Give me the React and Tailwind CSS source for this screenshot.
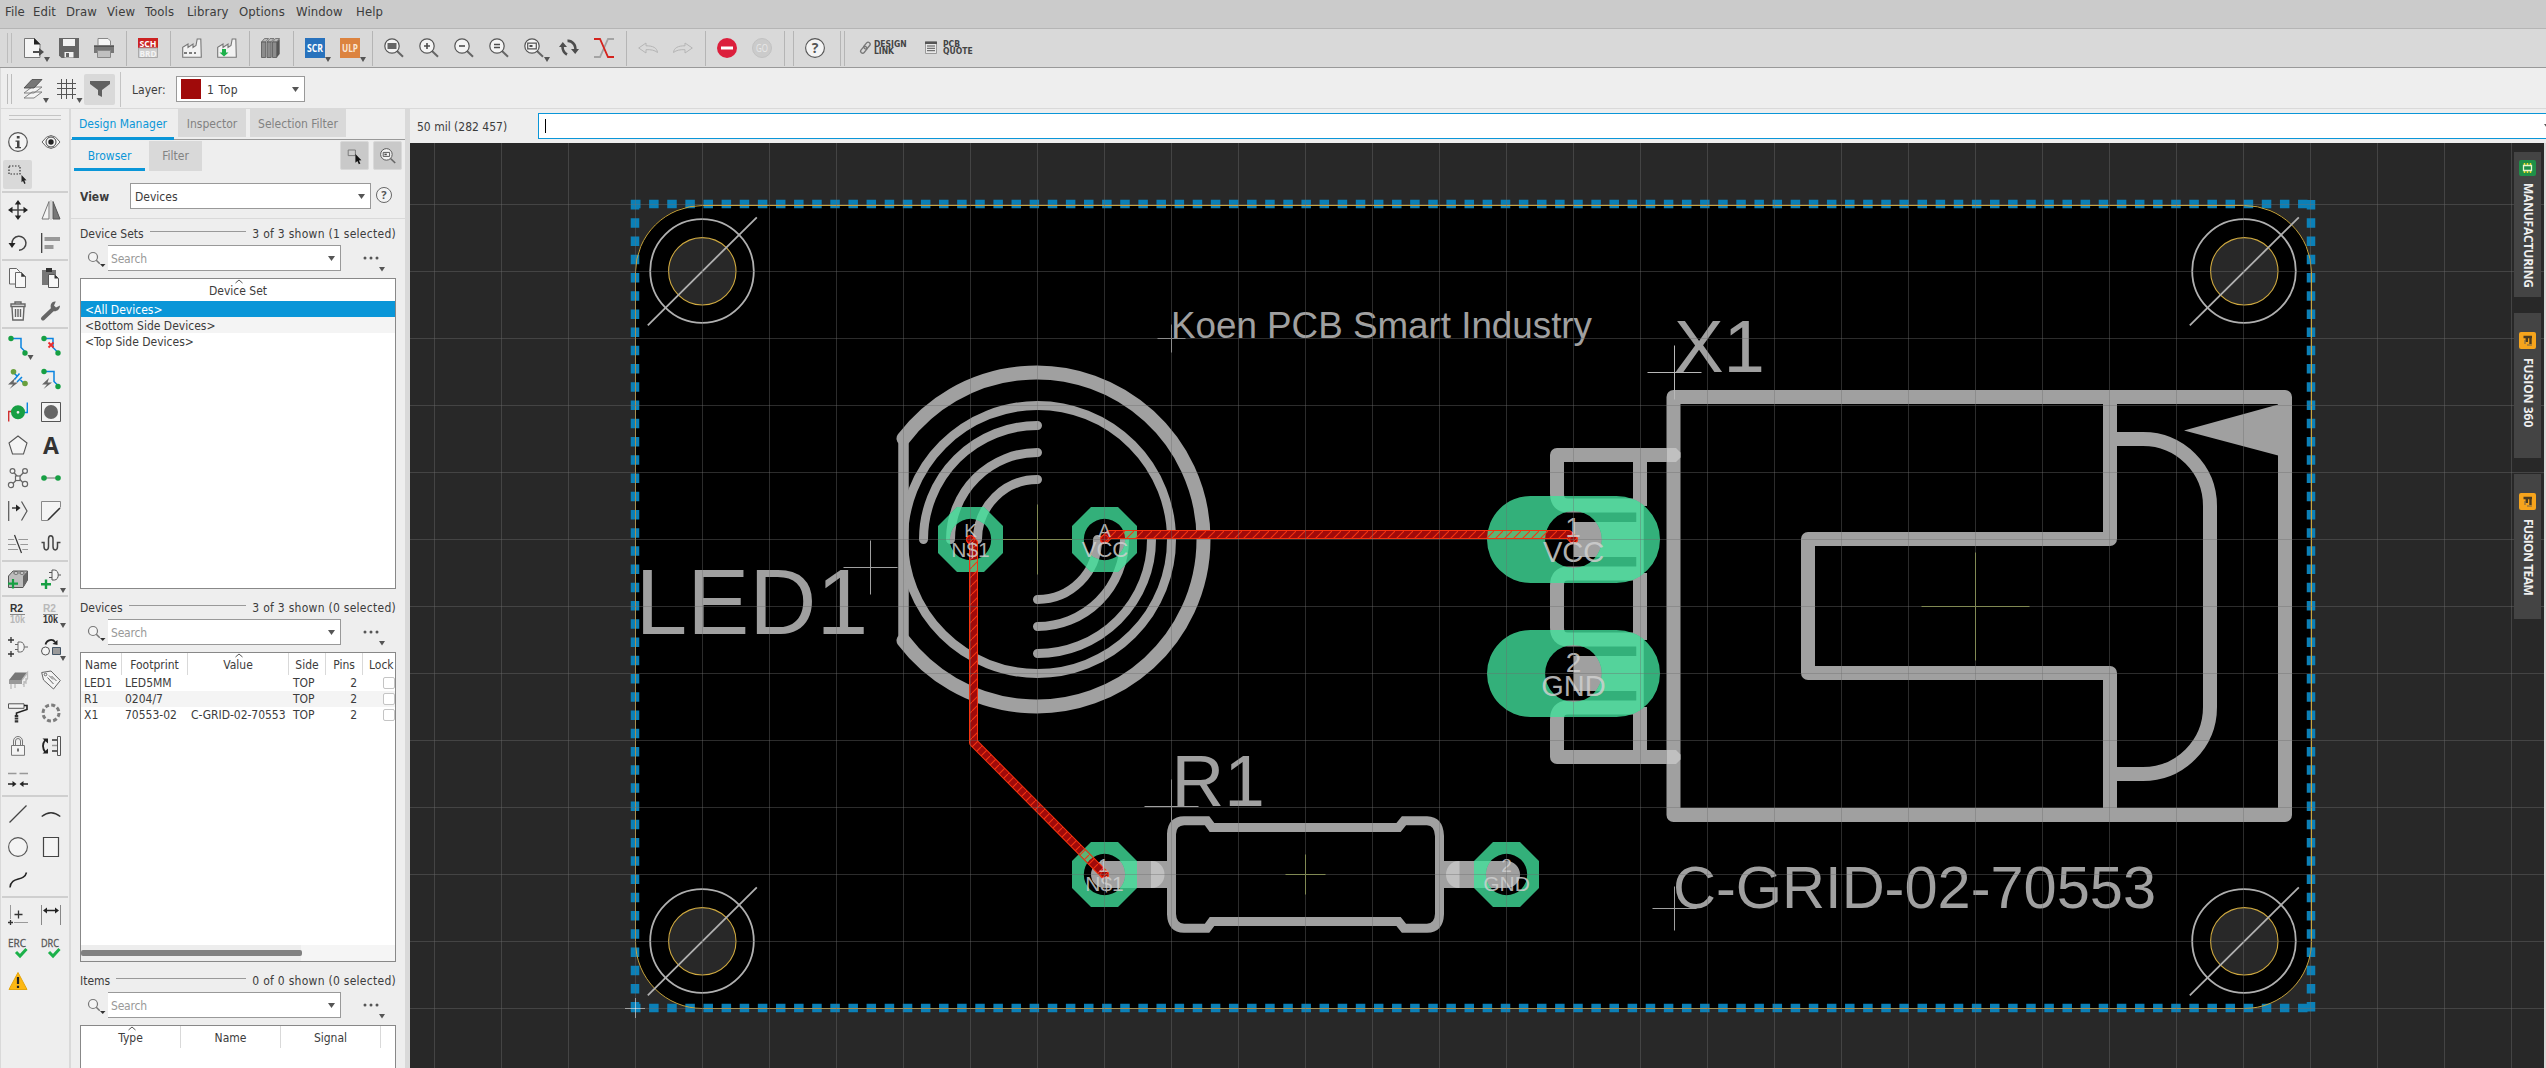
import React from "react";

const D = "#4d4d4d";
const G = "#169f43";
const B = "#0a84e0";

const Arrow = ({ x = 20, y = 19 }) => <path d={`M${x} ${y}h6l-3 5z`} fill="#555" />;

function Lens({ children }) {
  return (
    <>
      <path d="M12.5 12.5l6.5 6.2" stroke="#666" strokeWidth="2" />
      <circle cx="8" cy="8" r="7.2" fill="#f4f4f4" stroke="#555" strokeWidth="1.2" />
      {children}
    </>
  );
}

const Factory = () => (
  <path d="M.7 19.3V9.2L6 6v3.4L11 6v3.4l3-1.9L15.2 1h3.6l.5 18.3z" fill="#f2f2f2" stroke="#777" strokeWidth="1.1" />
);

const ICONS = {
  new: (
    <>
      <path d="M.5.5h10l5.5 5.5v13.500H.5z" fill="#f5f5f5" stroke="#777" />
      <path d="M10 0l6.500 6.500H10z" fill="#222" />
      <path d="M9 14h8" stroke={D} strokeWidth="2" />
      <path d="M15 10l5 4-5 4z" fill={D} />
      <Arrow />
    </>
  ),
  save: (
    <>
      <path d="M0 0h20v20H2.500L0 17.500z" fill="#666" />
      <path d="M4 1h12v7H4z" fill="#f2f2f2" />
      <path d="M5.500 14h9v5.500h-9z" fill="#f2f2f2" />
      <path d="M7 15h3v4H7z" fill="#666" />
    </>
  ),
  print: (
    <>
      <path d="M4 7V.5h10l2.500 2.500V7" fill="#f5f5f5" stroke="#888" />
      <path d="M0 7h20v8H0z" fill="#777" />
      <path d="M0 8.500h20" stroke="#555" />
      <path d="M3.500 12.500h13v7h-13z" fill="#c0c0c0" stroke="#888" />
    </>
  ),
  sch: (
    <>
      <path d="M0 0h20v10H0z" fill="#cc2222" />
      <path d="M.5 10h19v9.500H.5z" fill="#cfcfcf" stroke="#aaa" />
      <text x="10" y="8.700" textAnchor="middle" fontSize="9" fontWeight="bold" fill="#fff" fontFamily="Open Sans" textLength="17" lengthAdjust="spacingAndGlyphs">SCH</text>
      <text x="10" y="18.500" textAnchor="middle" fontSize="9" fontWeight="bold" fill="#f4f4f4" fontFamily="Open Sans" textLength="17" lengthAdjust="spacingAndGlyphs">BRD</text>
    </>
  ),
  fac: (
    <>
      <Factory />
      <path d="M2 15h12" stroke="#555" strokeWidth="1.500" strokeDasharray="3 2" />
    </>
  ),
  fac2: (
    <>
      <Factory />
      <path d="M5 11h4v3.500h2.500L7 18.500 2.500 14.500H5z" fill="#1cb14a" />
    </>
  ),
  books: (
    <>
      {[0, 5.5, 11].map((x) => (
        <g key={x}>
          <path d={`M${x + 0.5} 4l3-3.500h4l-3 3.500z`} fill="#bbb" stroke="#666" strokeWidth=".8" />
          <path d={`M${x + 0.5} 4h4.200v15.500h-4.200z`} fill="#8c8c8c" stroke="#555" strokeWidth=".8" />
        </g>
      ))}
      <path d="M15.700 4l3-3v15l-3 3.500z" fill="#555" />
    </>
  ),
  scr: (
    <>
      <path d="M0 0h20v20H0z" fill="#2872bd" />
      <text x="10" y="13.500" textAnchor="middle" fontSize="10" fontWeight="bold" fill="#fff" fontFamily="Open Sans" textLength="16" lengthAdjust="spacingAndGlyphs">SCR</text>
      <Arrow />
    </>
  ),
  ulp: (
    <>
      <path d="M0 0h20v20H0z" fill="#dc833f" />
      <text x="10" y="13.500" textAnchor="middle" fontSize="10" fontWeight="bold" fill="#fbe6d4" fontFamily="Open Sans" textLength="16" lengthAdjust="spacingAndGlyphs">ULP</text>
      <Arrow />
    </>
  ),
  zfit: <Lens><path d="M3.500 5h9v6h-9z" fill="#666" /></Lens>,
  zin: <Lens><path d="M8 5v6M5 8h6" stroke={D} strokeWidth="1.600" /></Lens>,
  zout: <Lens><path d="M5 8h6" stroke={D} strokeWidth="1.600" /></Lens>,
  zeq: <Lens><path d="M5 6.500h6M5 9.500h6" stroke={D} strokeWidth="1.300" /></Lens>,
  zsel: (
    <>
      <Lens><path d="M3.700 5.200h8.600v5.600H3.700z" fill="none" stroke="#555" strokeWidth="1.200" /><path d="M5.500 7h3v2h-3z" fill={D} /></Lens>
      <Arrow />
    </>
  ),
  zdev: <Lens><path d="M4 5.500h8v5H4z" fill="none" stroke="#555" strokeWidth="1.200" /><path d="M5.500 7h3v2h-3z" fill={D} /></Lens>,
  pick: (
    <>
      <path d="M1.500 2.500h9v7h-9z" fill="#ccc" stroke="#777" strokeWidth="1.200" />
      <path d="M10.500 7.500l7.500 7.800-3.200.3 1.900 3.900-1.900.8-1.800-3.900-2.500 2z" fill="#111" />
    </>
  ),
  redraw: (
    <>
      <path d="M3.500 8.500Q3.500 14 8 16.500M16.500 11.500Q16.500 6 12 3.500q-1.500-.8-3.500-.6" fill="none" stroke={D} strokeWidth="2.600" />
      <path d="M0 9l3.800-5L8 9zM12 11l4.200 5L20 11z" fill={D} />
    </>
  ),
  ratio: (
    <>
      <path d="M0 19h6l8-18h6" fill="none" stroke="#a3a3a3" strokeWidth="1.800" />
      <path d="M0 1h6l8 18h6" fill="none" stroke="#d4231d" strokeWidth="1.800" />
    </>
  ),
  undo: <path d="M.7 10L8 5v2.800c7 0 11 2 11.500 6.700-3-2.500-7-3-11.500-2.800V15z" fill="none" stroke="#b5b5b5" />,
  redo: <path d="M19.300 10L12 5v2.800C5 7.800 1 9.800.5 14.500c3-2.500 7-3 11.500-2.800V15z" fill="none" stroke="#b5b5b5" />,
  stop: (
    <>
      <circle cx="10" cy="10" r="10" fill="#dc1f3c" />
      <path d="M4 8.500h12v3H4z" fill="#fff" />
    </>
  ),
  go: (
    <>
      <circle cx="10" cy="10" r="9.500" fill="#cbcbcb" stroke="#c2c2c2" />
      <text x="10" y="13.800" textAnchor="middle" fontSize="10" fill="#e8e8e8" fontFamily="Open Sans" textLength="12" lengthAdjust="spacingAndGlyphs">GO</text>
    </>
  ),
  help: (
    <>
      <circle cx="10" cy="10" r="9.400" fill="#f4f4f4" stroke="#555" strokeWidth="1.100" />
      <text x="10" y="15" textAnchor="middle" fontSize="14" fontWeight="bold" fill="#555" fontFamily="Open Sans">?</text>
    </>
  ),
  link: (
    <g fill="none" stroke="#777" strokeWidth="1.300">
      <rect x="-3.800" y="-2" width="7.600" height="4" rx="2" transform="translate(3.800 11.800) rotate(-50)" />
      <rect x="-3.800" y="-2" width="7.600" height="4" rx="2" transform="translate(7 7.600) rotate(-50)" />
    </g>
  ),
  quote: (
    <>
      <path d="M.5 4h11v11.500H.5z" fill="#e8e8e8" stroke="#999" />
      <path d="M0 3.500h12v2.500H0z" fill="#555" />
      <path d="M2 8h8M2 10.300h8M2 12.700h8" stroke="#555" />
    </>
  ),
  layers: (
    <>
      <path d="M1 19l8-6h10l-8 6zM1 14l8-6h10l-8 6z" fill="#f4f4f4" stroke="#777" strokeWidth=".9" />
      <path d="M1 9l8-8.500h10L11 9z" fill="#777" stroke="#444" strokeWidth=".8" />
      <Arrow x={20} y={19} />
    </>
  ),
  grid: (
    <>
      <path d="M4.500 0v20M9.500 0v20M15.500 0v20M0 4.500h19M0 9.500h19M0 15.500h19" stroke="#555" strokeWidth="1" />
      <Arrow x={19.500} y={19} />
    </>
  ),
  funnel: <path d="M0 2h20v3l-8 6v7l-4-2v-5L0 5z" fill="#606060" />,
  info: (
    <>
      <circle cx="10" cy="10" r="9.300" fill="#f4f4f4" stroke="#555" strokeWidth="1.200" />
      <path d="M8.800 4h2.800v2.500H8.800zM7.500 8.500h4V15H13v1.200H7.300V15H9V9.700H7.500z" fill="#444" />
    </>
  ),
  eye: (
    <>
      <path d="M1 10q9-13 18 0-9 13-18 0z" fill="#f4f4f4" stroke="#666" />
      <circle cx="10" cy="10" r="5" fill="none" stroke="#444" />
      <circle cx="10" cy="10" r="2.700" fill="#222" />
    </>
  ),
  select: (
    <>
      <path d="M1 1h11v8H1z" fill="none" stroke="#333" strokeWidth="1.200" strokeDasharray="1.500 1.500" />
      <path d="M13.500 10l5 5.200-2.200.2 1.300 2.900-1.300.6-1.300-2.900-1.500 1.300z" fill="#222" />
    </>
  ),
  move: (
    <>
      <path d="M10 3v14M3 10h14" stroke="#444" strokeWidth="1.500" />
      <path d="M10 0l3.200 4.500H6.800zM10 20l3.200-4.500H6.800zM0 10l4.500-3.200v6.400zM20 10l-4.500-3.200v6.400z" fill="#222" />
    </>
  ),
  mirror: (
    <>
      <path d="M8 1.500V19H1z" fill="#f4f4f4" stroke="#777" />
      <path d="M12 1.500V19h7z" fill="#777" stroke="#555" />
      <path d="M10 0v20" stroke="#aaa" strokeWidth=".7" />
    </>
  ),
  rotate: (
    <>
      <path d="M4 11A7 7 0 1 1 11 17.200" fill="none" stroke="#444" strokeWidth="1.500" />
      <path d="M.5 10h7L4 15z" fill="#222" />
    </>
  ),
  align: (
    <>
      <path d="M.700 0v20" stroke="#333" strokeWidth="1.200" />
      <path d="M3.500 4H19v4H3.500zM3.500 12h9v4h-9z" fill="#999" />
    </>
  ),
  copy: (
    <g fill="#f7f7f7" stroke="#666">
      <path d="M1.500.5h7l3 3V16h-10z" />
      <path d="M7.500 4.500h6l4 4v11h-10z" />
      <path d="M13.500 4.500v4h4z" fill="#333" />
    </g>
  ),
  paste: (
    <>
      <path d="M1 2h14v15H1z" fill="#777" />
      <path d="M5 0h6v4H5z" fill="#333" />
      <path d="M7.500 6.500h6l4 4v9h-10z" fill="#f7f7f7" stroke="#555" />
      <path d="M13.500 6.500v4h4z" fill="#333" />
    </>
  ),
  trash: (
    <g fill="none" stroke="#666" strokeWidth="1.400">
      <path d="M7 3V1h6v2" />
      <path d="M3 3h14v2.500H3zM4 6l.8 13h10.400L16 6" fill="#f4f4f4" />
      <path d="M7.500 8v8M10 8v8M12.500 8v8" />
    </g>
  ),
  wrench: (
    <>
      <path d="M2 17.500L12 8" stroke="#666" strokeWidth="4" strokeLinecap="round" />
      <path d="M19 4.500l-4 2-2-2L14.800.6C10 0 8.500 5 10.500 8.500s8.500 1.500 8.500-4z" fill="#666" />
    </>
  ),
  route: (
    <>
      <path d="M3 2.500h10v9l5 5" fill="none" stroke={B} strokeWidth="1.500" />
      <circle cx="3" cy="2.500" r="2.700" fill={G} />
      <circle cx="17" cy="17" r="2.700" fill={G} />
      <Arrow x={19.500} y={19} />
    </>
  ),
  ripup: (
    <>
      <path d="M3 2.500h9v9l5 5" fill="none" stroke={B} strokeWidth="1.500" />
      <circle cx="3" cy="2.500" r="2.700" fill={G} />
      <circle cx="17" cy="17" r="2.700" fill={G} />
      <path d="M7.500 6.500l5 5M12.500 6.500l-5 5" stroke="#ee2a2a" strokeWidth="1.800" />
    </>
  ),
  rats: (
    <>
      <path d="M5 3l4.500 4.500M12.500 11L17 15.500M6.500 10.500l5-6M9 13l5-5" stroke={B} strokeWidth="1.500" />
      <circle cx="5.500" cy="2.800" r="2.800" fill="#69a03e" />
      <circle cx="17" cy="14.500" r="2.800" fill="#69a03e" />
      <path d="M7 9L0 15.500h5L1.500 20 10 13.500H5.500z" fill="#666" />
    </>
  ),
  auto: (
    <>
      <path d="M3 2.500h10v10l4 4" fill="none" stroke={B} strokeWidth="1.500" />
      <circle cx="3" cy="2.500" r="2.700" fill={G} />
      <circle cx="17" cy="17.500" r="2.700" fill={G} />
      <path d="M8 9L1 15.500h5L2.500 20 11 13.500H6.500z" fill="#666" />
    </>
  ),
  via: (
    <>
      <path d="M.7 19.500V9.500h4" fill="none" stroke="#d03030" strokeWidth="1.400" />
      <path d="M19.300.5v10h-4" fill="none" stroke={B} strokeWidth="1.400" />
      <circle cx="10" cy="10.300" r="4.200" fill="none" stroke={G} strokeWidth="5.600" />
    </>
  ),
  hole: (
    <>
      <path d="M.5.500h19v19H.5z" fill="#f4f4f4" stroke="#555" />
      <circle cx="10" cy="10" r="7" fill="#666" />
    </>
  ),
  poly: <path d="M10 1l9 7-3.500 11h-11L1 8z" fill="#f4f4f4" stroke="#555" strokeWidth="1.100" />,
  text: <text x="10" y="18.500" textAnchor="middle" fontSize="23" fontWeight="bold" fill="#333" fontFamily="Open Sans">A</text>,
  net: (
    <g fill="#f4f4f4" stroke="#666" strokeWidth="1.200">
      <path d="M5 3.500l11 12.500M16.500 3.500L3.500 17" />
      <rect x="7.500" y="8" width="4.500" height="4.500" />
      <circle cx="4.500" cy="3" r="2.400" />
      <circle cx="17" cy="3" r="2.400" />
      <circle cx="3" cy="17" r="2.600" />
      <circle cx="17" cy="16" r="2.600" />
    </g>
  ),
  airwire: (
    <>
      <path d="M3 10h14" stroke="#999" strokeWidth="1.500" />
      <circle cx="3" cy="10" r="2.800" fill={G} />
      <circle cx="17" cy="10" r="2.800" fill={G} />
    </>
  ),
  split: (
    <>
      <path d="M.7 0v20M13.500.5L19 10l-5.500 9.500" fill="none" stroke="#555" strokeWidth="1.200" />
      <path d="M4 7h5" stroke="#222" strokeWidth="1.300" />
      <path d="M8 3.500l4.500 3.500L8 10.500z" fill="#222" />
    </>
  ),
  miter: (
    <>
      <path d="M7 19.500H.5V.5h19v7z" fill="#f4f4f4" />
      <path d="M7 19.500H.5V.5h19v6" fill="none" stroke="#888" />
      <path d="M7 19L19 7" stroke="#333" strokeWidth="1.600" />
    </>
  ),
  slice: (
    <>
      <path d="M0 5.500h20M0 10.500h20M0 15.500h20" stroke="#999" />
      <path d="M6.500 1l7 18" stroke="#eee" strokeWidth="4" />
      <path d="M6.500 1l7 18" stroke="#333" strokeWidth="1.200" />
    </>
  ),
  meander: <path d="M.5 8.500h2.500v4c0 4.500 4.500 4.500 4.500 0V5c0-4.500 4.500-4.500 4.500 0v7.500c0 4.500 4.500 4.500 4.500 0v-4H19.500" fill="none" stroke="#444" strokeWidth="1.500" />,
  addpart: (
    <>
      <path d="M.5 7L5 2h14.500v9L15 18.500H.5z" fill="#bdbdbd" stroke="#555" />
      <path d="M15 7l4.500-5v9L15 18.500z" fill="#666" />
      <ellipse cx="8" cy="4" rx="2.200" ry="1.300" fill="#eee" stroke="#444" strokeWidth=".8" />
      <ellipse cx="14" cy="4" rx="2.200" ry="1.300" fill="#eee" stroke="#444" strokeWidth=".8" />
      <path d="M5 10v9.500M0 14.700h10" stroke={G} strokeWidth="2.200" />
    </>
  ),
  addgate: (
    <>
      <path d="M11 1h2.500c5 0 5 10 0 10H11zM8 3.500h3M8 8.500h3M17.500 6H20" fill="#f4f4f4" stroke="#555" />
      <path d="M5 10.500v9.500M0 15.300h10" stroke={G} strokeWidth="2.400" />
      <Arrow x={19} y={19} />
    </>
  ),
  r2: (
    <g fontFamily="Liberation Sans" fontSize="10" fontWeight="bold">
      <text x="2" y="8" fill="#333" textLength="13" lengthAdjust="spacingAndGlyphs">R2</text>
      <path d="M2 10.500h15" stroke="#888" />
      <text x="2" y="19.300" fill="#b8b8b8" textLength="15" lengthAdjust="spacingAndGlyphs">10k</text>
    </g>
  ),
  r2b: (
    <g fontFamily="Liberation Sans" fontSize="10" fontWeight="bold">
      <text x="2" y="8" fill="#b8b8b8" textLength="13" lengthAdjust="spacingAndGlyphs">R2</text>
      <path d="M2 10.500h15" stroke="#888" />
      <text x="2" y="19.300" fill="#333" textLength="15" lengthAdjust="spacingAndGlyphs">10k</text>
      <Arrow x={19} y={19} />
    </g>
  ),
  gates: (
    <>
      <path d="M3 0v6M0 3h6M3 14v6M0 17h6" stroke="#333" strokeWidth="1.300" />
      <path d="M10 5h2.500c5 0 5 10 0 10H10zM7 7.500h3M7 12.500h3M16.500 10H20" fill="#f4f4f4" stroke="#666" />
    </>
  ),
  replace: (
    <>
      <path d="M4.500 7.500C6 2 12 2 14 5" fill="none" stroke="#222" strokeWidth="1.800" />
      <path d="M11.500 7l5-4v5z" fill="#222" />
      <circle cx="4.500" cy="14" r="4" fill="#f4f4f4" stroke="#555" />
      <path d="M11.500 10.500h8v7h-8z" fill="#999" stroke="#456" />
      <Arrow x={19} y={19} />
    </>
  ),
  chip: (
    <>
      <path d="M1 10l6-7.500h12.500L14 10z" fill="#777" />
      <path d="M1 10h13v4H1z" fill="#999" />
      <path d="M14 10l5.500-7.500v6L15 15M3 14v5M7 14v4M18 8v6M16 11v6" stroke="#bbb" strokeWidth="1.300" fill="none" />
    </>
  ),
  tag: (
    <g fill="#f4f4f4" stroke="#666">
      <path d="M.7 2.500L10 1l9.300 9.500-6.800 8.500L2.500 10z" />
      <circle cx="4.500" cy="4.500" r="1.300" />
      <path d="M8 5.500l4 4M6.500 7.500l6 6.500M10.500 6l5 5" />
    </g>
  ),
  paint: (
    <>
      <path d="M.5.8h15.500v4.500H.5z" fill="#f4f4f4" stroke="#555" />
      <path d="M16 2.500h3v4L8.500 10v3.500" fill="none" stroke="#222" strokeWidth="1.600" />
      <path d="M8.500 12v8" stroke="#333" strokeWidth="3.500" strokeDasharray="2 .6" />
    </>
  ),
  array: <circle cx="10" cy="10" r="8" fill="none" stroke="#7d7d7d" strokeWidth="3" strokeDasharray="4 2.280" />,
  lock: (
    <g stroke="#777" fill="none">
      <path d="M5.500 9.500V5a4.500 4.500 0 0 1 9 0v4.500M7.500 9.500V5a2.500 2.500 0 0 1 5 0v4.500" />
      <path d="M3.500 9.500h13v9.800h-13z" fill="#f4f4f4" />
      <path d="M10 12.500v3" stroke="#444" strokeWidth="1.500" />
    </g>
  ),
  pinswap: (
    <>
      <path d="M4.500 3.500q-5 6.500 0 13" fill="none" stroke="#222" strokeWidth="1.800" />
      <path d="M1.500 2.500h5.500v5zM1.500 17.500h5.500v-5z" fill="#222" />
      <path d="M16.500.5h3v19h-3z" fill="#f4f4f4" stroke="#555" />
      <path d="M11 4h5M11 15h5" stroke="#333" strokeWidth="1.500" />
      <path d="M11 9.500h5" stroke="#999" strokeWidth="1.500" />
    </>
  ),
  optimize: (
    <>
      <path d="M0 4.500h8.500M11.500 4.500H20" stroke="#999" strokeWidth="1.400" />
      <path d="M0 15h5M20 15h-5" stroke="#222" strokeWidth="1.300" />
      <path d="M4.500 12l4 3-4 3zM15.500 12l-4 3 4 3z" fill="#222" />
    </>
  ),
  line: <path d="M1.500 18.500l17-17" stroke="#444" strokeWidth="1.200" />,
  arc: <path d="M.7 12.500q9.300-7.500 18.600 0" fill="none" stroke="#333" strokeWidth="1.300" />,
  circle: <circle cx="10" cy="10" r="9.400" fill="#f4f4f4" stroke="#555" strokeWidth="1.100" />,
  rect: <path d="M2.500.5h15v19h-15z" fill="#f4f4f4" stroke="#444" strokeWidth="1.200" />,
  spline: <path d="M2 17.500c1-12 14-5 16.500-15" fill="none" stroke="#222" strokeWidth="1.500" />,
  mark: (
    <>
      <path d="M2.500 0v14M6 17.500h14" stroke="#999" />
      <path d="M10.500 5.500v8M6.500 9.500h8M2.500 15v5M0 17.500h5" stroke="#333" strokeWidth="1.300" />
    </>
  ),
  dimension: (
    <>
      <path d="M.5 0v20M19.500 0v20" stroke="#888" />
      <path d="M4 5.500h12" stroke="#222" strokeWidth="1.500" />
      <path d="M2 5.500l4-3v6zM18 5.500l-4-3v6z" fill="#222" />
    </>
  ),
  erc: (
    <>
      <text x="0" y="9" fontSize="11" fill="#555" stroke="#555" strokeWidth=".3" fontFamily="Open Sans" textLength="18" lengthAdjust="spacingAndGlyphs">ERC</text>
      <path d="M8 14l4 4 6.500-7" fill="none" stroke="#1cb14a" strokeWidth="3" />
    </>
  ),
  drc: (
    <>
      <text x="0" y="9" fontSize="11" fill="#555" stroke="#555" strokeWidth=".3" fontFamily="Open Sans" textLength="18" lengthAdjust="spacingAndGlyphs">DRC</text>
      <path d="M8 14l4 4 6.500-7" fill="none" stroke="#1cb14a" strokeWidth="3" />
    </>
  ),
  warn: (
    <>
      <path d="M10 1.500l9 17H1z" fill="#fdb813" stroke="#e5a50a" />
      <path d="M10 6v7M10 14.800v2.200" stroke="#222" strokeWidth="2.200" />
    </>
  ),
};

function Icon({ n, size = 20 }) {
  return (
    <svg width={size} height={size} viewBox="0 0 20 20" className="block shrink-0 overflow-visible">
      {ICONS[n]}
    </svg>
  );
}

const MENU = [
  ["File", "w-[28px]"], ["Edit", "w-[33px]"], ["Draw", "w-[41px]"], ["View", "w-[38px]"], ["Tools", "w-[42px]"],
  ["Library", "w-[52px]"], ["Options", "w-[57px]"], ["Window", "w-[60px]"], ["Help", "w-[40px]"],
];

function MenuBar() {
  return (
    <div className="flex h-[29px] shrink-0 border-b border-[#b5b5b5] bg-[#cbcbcb] pl-[5px] pt-[3px] text-[13px] leading-[17px] tracking-[0.1px]">
      {MENU.map(([t, w]) => <span key={t} className={w}>{t}</span>)}
    </div>
  );
}

const BAR = ["new", "save", "print", "|", "sch", "|", "fac", "fac2", "|", "books", "|", "scr", "ulp", "|", "zfit", "zin", "zout", "zeq", "zsel", "redraw", "ratio", "|", "undo", "redo", "|", "stop", "go", "|", "|", "help"];

const Grip = () => <span className="mr-[12px] h-[30px] w-[5px] shrink-0 border-x border-[#bcbcbc]" />;

function ToolBar() {
  return (
    <div className="flex h-[39px] shrink-0 items-center border-b border-[#999] bg-[#d9d9d9] pl-[7px]">
      <Grip />
      {BAR.map((n, i) =>
        n === "|" ? (
          <span key={i} className="-ml-[3px] h-[35px] w-[12px] shrink-0 border-l border-[#b5b5b5]" />
        ) : (
          <span key={i} className="mr-[15px]"><Icon n={n} /></span>
        )
      )}
      <span className="mr-[15px] h-[35px] w-[5px] shrink-0 border-x border-[#b5b5b5]" />
      <Icon n="link" />
      <span className="-ml-[6px] w-[50px] text-[8.5px] leading-[7.5px] font-bold text-[#444]">DESIGN<br />LINK</span>
      <span className="ml-[1px]"><Icon n="quote" /></span>
      <span className="-ml-[2px] text-[8.5px] leading-[7.5px] font-bold text-[#444]">PCB<br />QUOTE</span>
    </div>
  );
}

const Tri = () => <svg width="7" height="5" className="block shrink-0"><path d="M0 0h7L3.500 5z" fill="#555" /></svg>;

function LayerBar() {
  return (
    <div className="flex h-[41px] shrink-0 items-center border-b border-l border-b-[#d9d9d9] border-l-[#d9d9d9] bg-[#eee] pt-[2px] pl-[6px]">
      <Grip />
      <span className="-ml-[1px] mr-[14px]"><Icon n="layers" /></span>
      <span className="mr-[7px]"><Icon n="grid" /></span>
      <span className="flex h-[31px] w-[31px] items-center justify-center rounded-[2px] bg-[#d9d9d9]"><Icon n="funnel" /></span>
      <span className="ml-[5px] mr-[11px] h-[35px] border-l border-[#c4c4c4]" />
      <span className="w-[44px] pt-px text-[12px]">Layer:</span>
      <div className="flex h-[26px] w-[129px] items-center border border-[#999] bg-white pl-[4px] pr-[5px] text-[12px]">
        <span className="mr-[6px] h-[20px] w-[20px] bg-[#a00a0a]" />
        <span className="grow pt-px tracking-[0.6px]">1 Top</span>
        <Tri />
      </div>
    </div>
  );
}

const TOOLS = [
  [["info", "eye"], ["select"]],
  [["move", "mirror"], ["rotate", "align"]],
  [["copy", "paste"], ["trash", "wrench"]],
  [["route", "ripup"], ["rats", "auto"], ["via", "hole"], ["poly", "text"], ["net", "airwire"], ["split", "miter"], ["slice", "meander"]],
  [["addpart", "addgate"]],
  [["r2", "r2b"], ["gates", "replace"], ["chip", "tag"], ["paint", "array"], ["lock", "pinswap"], ["optimize"]],
  [["line", "arc"], ["circle", "rect"], ["spline"]],
  [["mark", "dimension"], ["erc", "drc"], ["warn"]],
];

function ToolBox() {
  return (
    <div className="flex w-[71px] shrink-0 flex-col border-l border-r-2 border-[#d9d9d9] bg-[#eee] px-px pt-[6px]">
      <span className="mx-[7px] mb-[5px] h-[5px] border-y border-[#c4c4c4]" />
      {TOOLS.map((g, i) => (
        <div key={i} className={i ? "border-t-2 border-[#cfcfcf]" : ""}>
          {g.map((r) => (
            <div key={r[0]} className="flex h-[33px] items-center gap-[4px] pl-px">
              {r.map((n) => (
                <span key={n} className={n === "select" ? "flex h-[29px] w-[29px] items-center justify-center rounded-[2px] bg-[#d9d9d9]" : "flex h-[29px] w-[29px] items-center justify-center"}>
                  <Icon n={n} />
                </span>
              ))}
            </div>
          ))}
        </div>
      ))}
    </div>
  );
}

function Section({ title, count }) {
  return (
    <>
      <div className="flex h-[15px] items-center pl-[9px] pr-[9px] text-[12px]">
        <span>{title}</span>
        <span className="-mt-[4px] ml-[6px] mr-[6px] grow border-t border-[#999]" />
        <span className="w-[144px] text-right tracking-[0.27px] whitespace-nowrap">{count}</span>
      </div>
      <div className="mt-[4px] mb-[7px] flex h-[26px] shrink-0">
        <svg width="37" height="26" className="block shrink-0">
          <circle cx="22" cy="12" r="4.500" fill="#f4f4f4" stroke="#777" strokeWidth="1.200" />
          <path d="M25.300 15.300l3.500 3.500" stroke="#777" strokeWidth="1.500" />
          <path d="M29 19h5.500l-2.750 3z" fill="#333" />
        </svg>
        <div className="flex w-[233px] items-center border border-l-0 border-[#999] bg-white pl-[3px] pr-[5px] text-[12px] text-[#999]">
          <span className="grow pt-px tracking-[-0.2px]">Search</span>
          <Tri />
        </div>
        <svg width="60" height="28" className="block overflow-visible">
          <circle cx="24" cy="13" r="1.500" fill="#555" />
          <circle cx="30" cy="13" r="1.500" fill="#555" />
          <circle cx="36" cy="13" r="1.500" fill="#555" />
          <path d="M38 22h6l-3 4.500z" fill="#555" />
        </svg>
      </div>
    </>
  );
}

const Sort = () => (
  <svg width="8" height="5" className="absolute left-1/2 top-0 -ml-[3px]"><path d="M.5 4L4 1l3.500 3" fill="none" stroke="#555" /></svg>
);

const ROWS = [
  ["LED1", "LED5MM", "", "TOP", "2"],
  ["R1", "0204/7", "", "TOP", "2"],
  ["X1", "70553-02", "C-GRID-02-70553", "TOP", "2"],
];

function Panel() {
  return (
    <div className="flex w-[334px] shrink-0 flex-col overflow-hidden bg-[#eee]">
      <div className="flex h-[31px] shrink-0 items-start border-b border-[#999] text-[12px] text-[#828282]">
        <span className="ml-px h-[31px] w-[102px] border-b-[3px] border-[#0a96d8] text-center leading-[31px] text-[#0a96d8]">Design Manager</span>
        <span className="ml-[4px] h-[28px] w-[68px] bg-[#d9d9d9] text-center leading-[31px]">Inspector</span>
        <span className="ml-[4px] h-[28px] w-[96px] bg-[#d9d9d9] text-center leading-[31px]">Selection Filter</span>
      </div>
      <div className="flex h-[43px] shrink-0 items-start pt-px text-[12px] text-[#828282]">
        <span className="ml-[3px] h-[30px] w-[71px] border-b-[3px] border-[#0a96d8] text-center leading-[31px] text-[#0a96d8]">Browser</span>
        <span className="ml-[4px] h-[30px] w-[53px] bg-[#d9d9d9] text-center leading-[31px]">Filter</span>
        <span className="ml-auto flex h-[29px] w-[29px] items-center justify-center rounded-[2px] border border-[#d9d9d9] bg-[#c9c9c9]"><Icon n="pick" size={16} /></span>
        <span className="ml-[4px] mr-[3px] flex h-[29px] w-[29px] items-center justify-center rounded-[2px] border border-[#d9d9d9] bg-[#c9c9c9]"><Icon n="zdev" size={16} /></span>
      </div>
      <div className="flex h-[36px] shrink-0 items-start border-b border-[#d9d9d9] pl-[9px]">
        <span className="w-[50px] text-[12px] leading-[29px] font-bold">View</span>
        <div className="flex h-[26px] w-[241px] items-center border border-[#999] bg-white pl-[4px] pr-[5px]">
          <span className="grow pt-px text-[12px]">Devices</span>
          <Tri />
        </div>
        <span className="ml-[5px] mt-[4px]"><Icon n="help" size={16} /></span>
      </div>

      <div className="mt-[7px]" />
      <Section title="Device Sets" count="3 of 3 shown (1 selected)" />
      <div className="mx-[9px] h-[311px] shrink-0 border border-[#888] bg-white text-[12px]">
        <div className="relative h-[22px] pt-[4px] text-center leading-[17px]"><Sort />Device Set</div>
        <div className="h-[16px] bg-[#0a96d8] pl-[4px] leading-[18px] text-white">&lt;All Devices&gt;</div>
        <div className="h-[16px] bg-[#f4f4f4] pl-[4px] leading-[18px]">&lt;Bottom Side Devices&gt;</div>
        <div className="h-[16px] pl-[4px] leading-[18px]">&lt;Top Side Devices&gt;</div>
      </div>

      <div className="mt-[11px]" />
      <Section title="Devices" count="3 of 3 shown (0 selected)" />
      <div className="mx-[9px] flex h-[310px] shrink-0 flex-col overflow-hidden border border-[#888] bg-white text-[12px]">
        <div className="flex h-[22px] text-center leading-[25px]">
          <span className="w-[41px] shrink-0 border-r border-[#d9d9d9]">Name</span>
          <span className="w-[66px] shrink-0 border-r border-[#d9d9d9]">Footprint</span>
          <span className="relative w-[101px] shrink-0 border-r border-[#d9d9d9]"><Sort />Value</span>
          <span className="w-[37px] shrink-0 border-r border-[#d9d9d9]">Side</span>
          <span className="w-[37px] shrink-0 border-r border-[#d9d9d9]">Pins</span>
          <span className="w-[32px] shrink-0 overflow-hidden pl-[6px] text-left">Lock</span>
        </div>
        {ROWS.map((r, i) => (
          <div key={r[0]} className={i === 1 ? "flex h-[16px] bg-[#f4f4f4] leading-[16px]" : "flex h-[16px] leading-[16px]"}>
            <span className="w-[41px] shrink-0 pl-[3px]">{r[0]}</span>
            <span className="w-[66px] shrink-0 pl-[3px]">{r[1]}</span>
            <span className="w-[101px] shrink-0 pl-[3px] tracking-[-0.04px] whitespace-nowrap">{r[2]}</span>
            <span className="w-[37px] shrink-0 pl-[4px]">{r[3]}</span>
            <span className="w-[37px] shrink-0 pr-[6px] text-right">{r[4]}</span>
            <span className="ml-[20px] mt-[2px] h-[12px] w-[12px] shrink-0 rounded-[2px] border border-[#c4c4c4] bg-white" />
          </div>
        ))}
        <div className="mt-auto flex h-[16px] items-center bg-[#f5f5f5]">
          <span className="flex h-full w-[220px] items-center bg-[#ededed]"><span className="h-[6px] w-[221px] shrink-0 rounded-[2px] bg-[#808080]" /></span>
        </div>
      </div>

      <div className="mt-[11px]" />
      <Section title="Items" count="0 of 0 shown (0 selected)" />
      <div className="mx-[9px] h-[60px] shrink-0 border border-b-0 border-[#888] bg-white text-[12px]">
        <div className="flex h-[22px] text-center leading-[25px]">
          <span className="relative w-[100px] border-r border-[#d9d9d9]"><Sort />Type</span>
          <span className="w-[100px] border-r border-[#d9d9d9]">Name</span>
          <span className="w-[100px] border-r border-[#d9d9d9]">Signal</span>
        </div>
      </div>
    </div>
  );
}

const LX = 1037.5;
const LY = 539.5;
const quarter = (r, s) => `M${LX} ${LY - s * r}A${r} ${r} 0 0 0 ${LX - s * r} ${LY}`;

/* Connector contact: fork around one pad, mirrored above and below the pad centre y. */
const fork = (y) =>
  `M1640 ${y - 34}H1568Q1557 ${y - 34} 1557 ${y - 46}M1640 ${y + 34}H1568Q1557 ${y + 34} 1557 ${y + 46}`;

function Silk({ color }) {
  return (
    <g fill="none" stroke={color} strokeWidth="9" strokeLinecap="round">
      <path d="M903.500 438.500A167 167 0 1 1 903.500 640.500" strokeWidth="14" />
      <path d="M903.500 439V640" strokeWidth="10.500" />
      <circle cx={LX} cy={LY} r="134" />
      {[114, 87, 60].map((r) => <path key={r} d={quarter(r, 1) + quarter(r, -1)} />)}

      <path d="M1171.500 834Q1172 821 1184 820.700H1207L1212 827.500H1398.500L1404 820.700H1427Q1439 821 1439.500 836V914Q1439 928 1427 928.300H1404L1398.500 921.500H1212L1207 928.300H1184Q1172 928 1171.500 914Z" />
      <path d="M1104.500 874.500H1150M1460 874.500H1506.500" strokeWidth="27" />
      <path d="M1145 874.500H1167M1444 874.500H1460" strokeWidth="27" strokeLinecap="butt" />

      <g strokeWidth="14" strokeLinejoin="bevel" strokeLinecap="butt">
        <path d="M1673.500 397H2285V815H1673.500Z" strokeLinejoin="round" />
        <path d="M2110 397V539H1808V673H2110V815" strokeLinejoin="round" />
        <path d="M2110 439H2143A67 67 0 0 1 2210 506V707A67 67 0 0 1 2143 774H2110" />
        <path d="M1557 494V455H1674M1557 585V628M1557 719V757H1674" strokeLinejoin="round" />
        <path d={fork(539.500) + fork(673.500)} />
        <path d="M1640 455V506M1640 573V640M1640 707V757" />
      </g>
      <path d="M1640 500V580M1640 636V714" strokeWidth="7.500" strokeLinecap="butt" />
      <path d="M1573.500 522H1640V557H1573.500ZM1573.500 656H1640V691H1573.500ZM2184 430.500L2280 404V456Z" fill={color} stroke="none" />
    </g>
  );
}

const OCT = [[970.5, 539.5], [1104.5, 539.5], [1104.5, 874.5], [1506.5, 874.5]];
const LONG = [539.5, 673.5];
const ring = (x, y, r) => `M${x - r} ${y}a${r} ${r} 0 1 0 ${2 * r} 0a${r} ${r} 0 1 0 ${-2 * r} 0z`;
const PADS =
  OCT.map(([x, y]) => `M${x - 13.5} ${y - 32.5}h27l19 19v27l-19 19h-27l-19-19v-27z` + ring(x, y, 20.7)).join("") +
  LONG.map((y) => `M1530.500 ${y - 43.5}H1616.500a43.500 43.500 0 0 1 0 87H1530.500a43.500 43.500 0 0 1 0-87z` + ring(1573.5, y, 28.4)).join("");

const Plus = ({ x, y, r, c = "#a0a0a0" }) => <path d={`M${x - r} ${y}h${2 * r}M${x} ${y - r}v${2 * r}`} stroke={c} strokeWidth="1" />;

const TRACES = ["M1104.500 539.500L1109.500 534.500H1568.500L1573.500 539.500", "M970.500 539.500L973.500 543V742.500L1104.500 874.500"];

const PADTEXT = [
  ["K", 970.5, 536.5, 19], ["N$1", 970.5, 556.5, 21], ["A", 1104.5, 536.5, 19], ["VCC", 1105, 556.5, 22],
  ["1", 1103.5, 872, 19], ["N$1", 1104.5, 891, 21], ["2", 1506.5, 872, 19], ["GND", 1506.5, 891, 21],
  ["1", 1573, 537, 28], ["VCC", 1573.5, 562, 29], ["2", 1573.5, 671.5, 28], ["GND", 1573.5, 696, 29],
];

function Board() {
  const xs = Array.from({ length: 32 }, (_, i) => 434.5 + 67 * i);
  const ys = Array.from({ length: 13 }, (_, i) => 204.5 + 67 * i);
  return (
    <svg width="2134" height="925" viewBox="410 143 2134 925" className="block bg-[#282828]" fontFamily="Liberation Sans, sans-serif">
      <defs>
        <clipPath id="pads"><path d={PADS} clipRule="evenodd" /></clipPath>
        <pattern id="hatch" width="9" height="9" patternUnits="userSpaceOnUse">
          <path d="M-1 10L10-1" stroke="#f5330f" strokeWidth="1.100" />
        </pattern>
      </defs>
      <path d="M702.500 205H2244.500A67 67 0 0 1 2311.500 272V941.500A67 67 0 0 1 2244.500 1008.500H702.500A67 67 0 0 1 635.500 941.500V272A67 67 0 0 1 702.500 205Z" fill="#000" />
      <path d="M631 204H2316M631 1008H2316" stroke="#0b80b7" strokeWidth="8.500" strokeDasharray="9.500 8.620" />
      <path d="M635 200V1012M2311 200V1012" stroke="#0b80b7" strokeWidth="8.500" strokeDasharray="9.500 8.730" />
      <path d="M702.500 205.500H2244.500A67 67 0 0 1 2311.500 272V941.500A67 67 0 0 1 2244.500 1008.500H702.500A67 67 0 0 1 635.500 941.500V272A67 67 0 0 1 702.500 205.500Z" fill="none" stroke="#c8a43c" />
      {[[702.3, 271.3], [2244.3, 271.3], [702.3, 941.3], [2244.3, 941.3]].map(([x, y]) => (
        <g key={x + "," + y} fill="none">
          <circle cx={x} cy={y} r="33.700" fill="#282828" stroke="#d0aa40" strokeWidth="1.100" />
          <circle cx={x - 0.3} cy={y - 0.3} r="51.800" stroke="#b0b0b0" strokeWidth="1.800" />
          <path d={`M${x - 54.5} ${y + 54}l109-108`} stroke="#b0b0b0" strokeWidth="1.800" />
        </g>
      ))}

      <Silk color="#a0a0a0" />
      <g fill="#c0c0c0">
        <path d="M1151 861h1a12.500 13.500 0 0 1 0 27h-1zM1459.500 861h-1a12.500 13.500 0 0 0 0 27h1z" />
        <path d="M1667 448h9l4.500 4.500v5l-4.500 4.500h-9zM1667 750h9l4.500 4.500v5l-4.500 4.500h-9z" />
      </g>
      <g fill="#a0a0a0">
        <text x="635.500" y="634" fontSize="93">LED1</text>
        <text x="1171.500" y="805.500" fontSize="73">R1</text>
        <text x="1674" y="372" fontSize="75" textLength="91" lengthAdjust="spacingAndGlyphs">X1</text>
        <text x="1171" y="338" fontSize="36" textLength="421" lengthAdjust="spacingAndGlyphs">Koen PCB Smart Industry</text>
        <text x="1673" y="908" fontSize="60" textLength="483" lengthAdjust="spacingAndGlyphs">C-GRID-02-70553</text>
      </g>
      <Plus x={870.5} y={567.5} r={27} />
      <Plus x={1171.5} y={338.5} r={14} />
      <Plus x={1171.5} y={806.5} r={27} />
      <Plus x={1674.5} y={372.5} r={27} c="#b8b8b8" />
      <Plus x={1674.5} y={908.5} r={22} />
      <Plus x={1037.5} y={539.5} r={35} c="#8c9c42" />
      <Plus x={1305.5} y={874.5} r={20} c="#8c9c42" />
      <Plus x={1975.5} y={606.5} r={54} c="#8c9c42" />

      <path d={PADS} fill="#33b07a" fillRule="evenodd" />
      <g clipPath="url(#pads)"><Silk color="#54d39b" /></g>

      <g fill="none" strokeLinejoin="round" strokeLinecap="round">
        {TRACES.map((d) => (
          <g key={d}>
            <path d={d} stroke="#f5330f" strokeWidth="9" />
            <path d={d} stroke="#a00a0a" strokeWidth="7" />
          </g>
        ))}
        <g clipPath="url(#pads)">{TRACES.map((d) => <path key={d} d={d} stroke="#5fb474" strokeWidth="7" />)}</g>
        {TRACES.map((d) => <path key={d} d={d} stroke="url(#hatch)" strokeWidth="8" />)}
        <g stroke="#ff2d10">
          <circle cx="970.500" cy="539.500" r="4" />
          <circle cx="1104.500" cy="539" r="4" />
          <circle cx="1573.500" cy="539.500" r="4" />
          <circle cx="1104.500" cy="874.500" r="4" />
        </g>
      </g>
      <g fill="#d0d0d0" fillOpacity=".85" textAnchor="middle">
        {PADTEXT.map(([t, x, y, s], i) => <text key={i} x={x} y={y} fontSize={s}>{t}</text>)}
      </g>

      <g stroke="#6e6e6e" strokeOpacity=".4">
        {xs.map((x) => <path key={x} d={`M${x} 143V1068`} />)}
        {ys.map((y) => <path key={y} d={`M410 ${y}H2544`} />)}
      </g>
      <path d="M625.500 1008.500h20M635.500 998.500v20" stroke="#fff" strokeDasharray="1 1" />
    </svg>
  );
}

const TAB = {
  pcb: ["flex h-[145px] w-[27px] flex-col items-center bg-[#444] pt-[8px]", "mt-[7px] tracking-[-0.2px]"],
  f360: ["flex h-[145px] w-[27px] flex-col items-center bg-[#444] pt-[19px]", "mt-[9px]"],
  team: ["flex h-[145px] w-[27px] flex-col items-center bg-[#444] pt-[19px]", "mt-[9px] tracking-[-0.5px]"],
};

function SideTab({ label, kind }) {
  const [box, txt] = TAB[kind];
  return (
    <div className={box}>
      {kind === "pcb" ? (
        <svg width="17" height="16">
          <rect width="17" height="16" rx="2" fill="#1f8f48" />
          <path d="M5.500 3v10M8.500 3v10M11.500 3v10" stroke="#f0dc1e" strokeWidth="1.500" />
          <path d="M4.500 5.500h8v5h-8z" fill="#1f8f48" stroke="#e8f4d0" strokeWidth="1.300" />
        </svg>
      ) : (
        <svg width="17" height="17">
          <rect width="17" height="17" rx="2" fill="#f6a41c" />
          <path d="M4.500 5h8.500M11.500 5v7M7.800 5v5" fill="none" stroke="#4a3a20" strokeWidth="2.400" />
          <path d="M6 12V8M13 13H8" fill="none" stroke="#6b6250" strokeWidth="1" />
        </svg>
      )}
      <span className={txt + " font-['Open_Sans'] text-[12px] leading-[16px] font-bold whitespace-nowrap text-[#eee] [writing-mode:vertical-rl]"}>{label}</span>
    </div>
  );
}

export default function App() {
  return (
    <div className="flex h-[1068px] w-[2546px] flex-col overflow-hidden bg-[#eee] font-['DejaVu_Sans_Condensed','DejaVu_Sans',sans-serif] text-[#3c3c3c]">
      <MenuBar />
      <ToolBar />
      <LayerBar />
      <div className="flex min-h-0 grow">
        <ToolBox />
        <Panel />
        <div className="w-[5px] shrink-0 bg-[#d9d9d9]" />
        <div className="flex min-w-0 grow flex-col">
          <div className="flex h-[34px] shrink-0 items-center pl-[7px]">
            <span className="w-[121px] pt-px text-[12px] whitespace-nowrap">50 mil (282 457)</span>
            <div className="flex h-[26px] grow items-center border border-r-0 border-[#0a96d8] bg-white pl-[6px]">
              <span className="h-[14px] w-px bg-black" />
              <span className="-mr-[5px] ml-auto"><Tri /></span>
            </div>
          </div>
          <div className="relative bg-[#d9d9d9]">
            <Board />
            <div className="absolute top-[9px] right-[5px] flex flex-col gap-[16px]">
              <SideTab label="MANUFACTURING" kind="pcb" />
              <SideTab label="FUSION 360" kind="f360" />
              <SideTab label="FUSION TEAM" kind="team" />
            </div>
          </div>
        </div>
      </div>
    </div>
  );
}
